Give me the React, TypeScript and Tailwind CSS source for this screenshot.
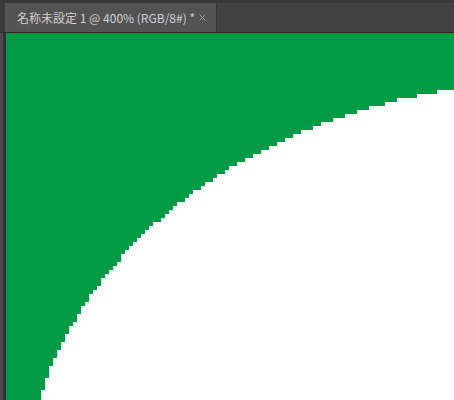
const ROWS: [number, number][] = [
  [90, 437], [94, 417], [98, 397], [102, 385], [106, 369], [110, 357], [114, 345], [118, 333],
  [122, 321], [126, 313], [130, 301], [134, 293], [138, 285], [142, 277], [146, 269], [150, 261],
  [154, 253], [158, 245], [162, 237], [166, 229], [170, 225], [174, 217], [178, 213], [182, 205],
  [186, 201], [190, 193], [194, 189], [198, 185], [202, 177], [206, 173], [210, 169], [214, 165],
  [218, 161], [222, 153], [226, 149], [230, 145], [234, 141], [238, 137], [242, 133], [246, 129],
  [250, 125], [254, 121], [258, 121], [262, 117], [266, 113], [270, 109], [274, 105], [278, 101],
  [282, 101], [286, 97], [290, 93], [294, 89], [298, 89], [302, 85], [306, 81], [310, 81],
  [314, 77], [318, 77], [322, 73], [326, 69], [330, 69], [334, 65], [338, 65], [342, 61],
  [346, 61], [350, 57], [354, 57], [358, 53], [362, 53], [366, 49], [370, 49], [374, 49],
  [378, 45], [382, 45], [386, 45], [390, 41], [394, 41], [398, 41],
]

// staircase outline of the white circle, in page coordinates
function stairs() {
  const pts: string[] = ["460,90"]
  ROWS.forEach(([y, x]) => {
    pts.push(`${x},${y}`, `${x},${y + 4}`)
  })
  pts.push("460,402")
  return pts.join(" ")
}

export default function App() {
  return (
    <div className="flex h-[400px] w-[454px] flex-col overflow-hidden bg-[#424242]">
      {/* Document tabs */}
      <div className="h-[3px] bg-[#383838]" />
      <div className="flex h-[29px] items-stretch bg-[#424242]">
        <div className="w-[5px] bg-[#3a3a3a]" />
        <div className="flex w-[212px] items-center justify-between border-r border-[#333333] bg-[#535353] pl-3 pr-[10px] text-[12px] text-[#d0d0d0] [font-family:'Noto_Sans_CJK_JP',sans-serif]">
          <span className="whitespace-nowrap">名称未設定 1 @ 400% (RGB/8#) *</span>
          <svg width="7" height="7" viewBox="0 0 7 7">
            <path d="M0.5 0.5 L6.5 6.5 M6.5 0.5 L0.5 6.5" stroke="#a0a0a0" strokeWidth="1" />
          </svg>
        </div>
      </div>
      <div className="h-px bg-[#2a2a2a]" />

      {/* Canvas */}
      <div className="flex flex-1">
        <div className="w-[3px] bg-[#4a4a4a]" />
        <div className="w-[3px] bg-[#333333]" />
        <div className="flex-1 bg-[#009944]">
          <svg width="448" height="367" viewBox="6 33 448 367" shapeRendering="crispEdges">
            <polygon points={stairs()} fill="#ffffff" />
          </svg>
        </div>
      </div>
    </div>
  )
}
